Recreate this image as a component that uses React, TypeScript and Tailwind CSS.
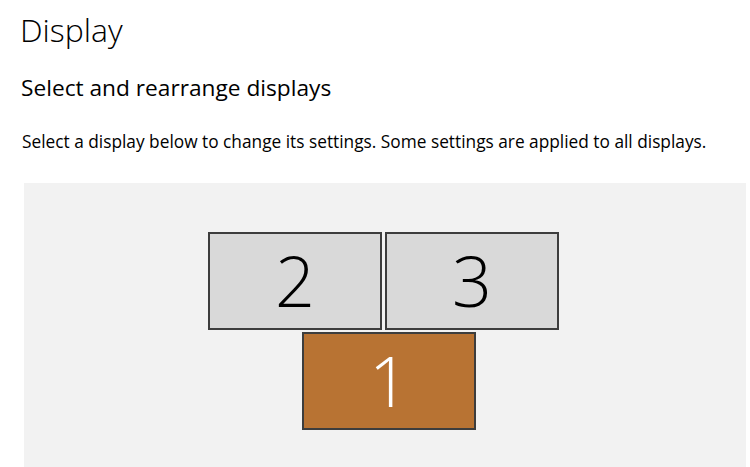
const font = { fontFamily: '"Open Sans", "Noto Sans", sans-serif' }

type Screen = { n: string; selected?: boolean }

function Monitor({ n, selected }: Screen) {
  return (
    <div
      className={`w-[174px] h-[98px] border-2 border-[#3d3d3d] flex items-center justify-center ${selected ? 'bg-[#b87333] text-white' : 'bg-[#d9d9d9] text-black'}`}
    >
      <span className="text-[70px] font-light leading-none pb-[2px]">{n}</span>
    </div>
  )
}

export default function App() {
  return (
    <div className="w-[750px] h-[467px] bg-white overflow-hidden" style={font}>
      <h1 className="text-[32px] font-light leading-none pl-[20px] pt-[14px] text-black">Display</h1>
      <h2 className="text-[22.7px] leading-none pl-[21px] pt-[31px] text-black">Select and rearrange displays</h2>
      <p className="text-[17.3px] leading-none pl-[22px] pt-[33px] text-black whitespace-nowrap">
        Select a display below to change its settings. Some settings are applied to all displays.
      </p>
      <div className="ml-[24px] mt-[33px] w-[722px] h-[284px] bg-[#f2f2f2] pt-[49px]">
        <div className="flex gap-[3px] pl-[184px]">
          <Monitor n="2" />
          <Monitor n="3" />
        </div>
        <div className="pl-[278px] pt-[2px]">
          <Monitor n="1" selected />
        </div>
      </div>
    </div>
  )
}
